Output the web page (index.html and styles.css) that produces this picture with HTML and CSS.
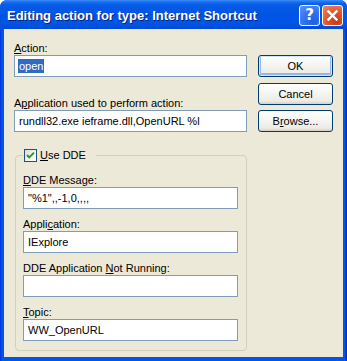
FILE: index.html
```html
<!DOCTYPE html>
<html>
<head>
<meta charset="utf-8">
<link rel="stylesheet" href="styles.css">
</head>
<body>
<div class="window">
  <div class="titlebar">
    <span class="title">Editing action for type: Internet Shortcut</span>
    <div class="caption-btns">
      <span class="cbtn help">?</span>
      <span class="cbtn close">
        <svg width="13" height="13" viewBox="0 0 13 13"><path d="M2.5 2.5 L10.5 10.5 M10.5 2.5 L2.5 10.5" stroke="#fff" stroke-width="2.4" stroke-linecap="square"/></svg>
      </span>
    </div>
  </div>
  <div class="client">
    <div class="left">
      <div class="lbl"><u>A</u>ction:</div>
      <div class="edit"><span class="sel">open</span></div>
      <div class="lbl lbl-gap">A<u>p</u>plication used to perform action:</div>
      <div class="edit">rundll32.exe ieframe.dll,OpenURL %l</div>
      <fieldset class="group">
        <legend class="legend">
          <span class="check">
            <svg width="11" height="11" viewBox="0 0 11 11"><path d="M2 5 L4.2 7.4 L9 2.6" fill="none" stroke="#21a121" stroke-width="2"/></svg>
          </span>
          <span><u>U</u>se DDE</span>
        </legend>
        <div class="lbl glbl first"><u>D</u>DE Message:</div>
        <div class="edit">"%1",,-1,0,,,,</div>
        <div class="lbl glbl">Appli<u>c</u>ation:</div>
        <div class="edit">IExplore</div>
        <div class="lbl glbl">DDE Application <u>N</u>ot Running:</div>
        <div class="edit"></div>
        <div class="lbl glbl"><u>T</u>opic:</div>
        <div class="edit">WW_OpenURL</div>
      </fieldset>
    </div>
    <div class="right">
      <div class="btn default">OK</div>
      <div class="btn btn-cancel">Cancel</div>
      <div class="btn btn-browse">B<u>r</u>owse...</div>
    </div>
  </div>
</div>
</body>
</html>
```

FILE: styles.css
```css
* { box-sizing: border-box; }
html, body { margin: 0; padding: 0; background: #fff; }
body { width: 347px; height: 361px; overflow: hidden; }

.window {
  width: 347px;
  height: 361px;
  display: flex;
  flex-direction: column;
  border-radius: 7px 7px 0 0;
  overflow: hidden;
  background: linear-gradient(90deg, #0831d9 0, #0055ea 2px, #0055ea 345px, #0019b0 347px);
}

.titlebar {
  height: 29px;
  flex: none;
  display: flex;
  align-items: center;
  justify-content: space-between;
  padding: 0 4px 0 7px;
  background: linear-gradient(#3d8ef8 0, #1a6ff0 2px, #0a5fe9 4px, #0458e6 9px, #0054e3 16px, #0055e6 24px, #0050dc 27px, #0046cc 29px);
}

.title {
  font-family: "Liberation Sans", "DejaVu Sans", sans-serif;
  font-weight: bold;
  font-size: 13px;
  color: #fff;
  text-shadow: 1px 1px 0 #0a1f7a;
  white-space: nowrap;
  padding-top: 1px;
}

.caption-btns {
  display: flex;
  gap: 2px;
  padding-top: 1px;
}

.cbtn {
  width: 21px;
  height: 21px;
  border: 1px solid #fff;
  border-radius: 3px;
  display: flex;
  align-items: center;
  justify-content: center;
  color: #fff;
}

.help {
  background: radial-gradient(circle at 70% 80%, #1e5fe0 0, #2f6ff0 40%, #5b93f8 100%);
  font-family: "DejaVu Sans", sans-serif;
  font-weight: bold;
  font-size: 15px;
  line-height: 1;
}

.close {
  background: radial-gradient(circle at 70% 80%, #c8381a 0, #e05528 45%, #ee8a6a 100%);
}

.client {
  flex: 1;
  margin: 0 4px 4px 4px;
  background: #ece9d8;
  display: flex;
  padding: 13px 0 0 10px;
  font-family: "Liberation Sans", "DejaVu Sans", sans-serif;
  font-size: 11px;
  color: #000;
}

.left {
  width: 233px;
  display: flex;
  flex-direction: column;
}

.lbl {
  height: 13px;
  line-height: 13px;
  white-space: nowrap;
}

.lbl-gap { margin-top: 20px; }

.edit {
  height: 22px;
  background: #fff;
  border: 1px solid #7f9db9;
  padding: 0 4px;
  line-height: 20px;
  white-space: nowrap;
}

.sel {
  background: #316ac5;
  color: #fff;
  display: inline-block;
  line-height: 14px;
  padding: 0 1px;
  margin-left: -1px;
}

.group {
  margin: 17px 0 0 1px;
  padding: 0 8px 9px 7px;
  border: 1px solid #d0d0bf;
  border-radius: 4px;
  display: flex;
  flex-direction: column;
  min-width: 0;
}

.legend {
  padding: 0 10px 0 1px;
  display: flex;
  align-items: center;
  gap: 3px;
  height: 13px;
  line-height: 13px;
}

.check {
  width: 13px;
  height: 13px;
  border: 1px solid #1c5180;
  background: linear-gradient(135deg, #dcdcd7 0, #f4f4f0 60%, #fff 100%);
  display: flex;
  align-items: center;
  justify-content: center;
}

.glbl { margin-top: 9px; }
.glbl.first { margin-top: 12px; }

.right {
  margin-left: 11px;
  padding-top: 13px;
  display: flex;
  flex-direction: column;
}

.btn {
  width: 75px;
  height: 22px;
  border: 1px solid #003c74;
  border-radius: 3px;
  background: linear-gradient(#ffffff 0, #f6f6f3 40%, #ecebe4 85%, #d6d0c5 100%);
  display: flex;
  align-items: center;
  justify-content: center;
}

.btn-cancel { margin-top: 6px; }
.btn-browse { margin-top: 5px; }

.btn.default {
  box-shadow: inset 0 0 0 1px #cee7ff, inset 0 -1px 0 2px #98b8ea;
}
```
